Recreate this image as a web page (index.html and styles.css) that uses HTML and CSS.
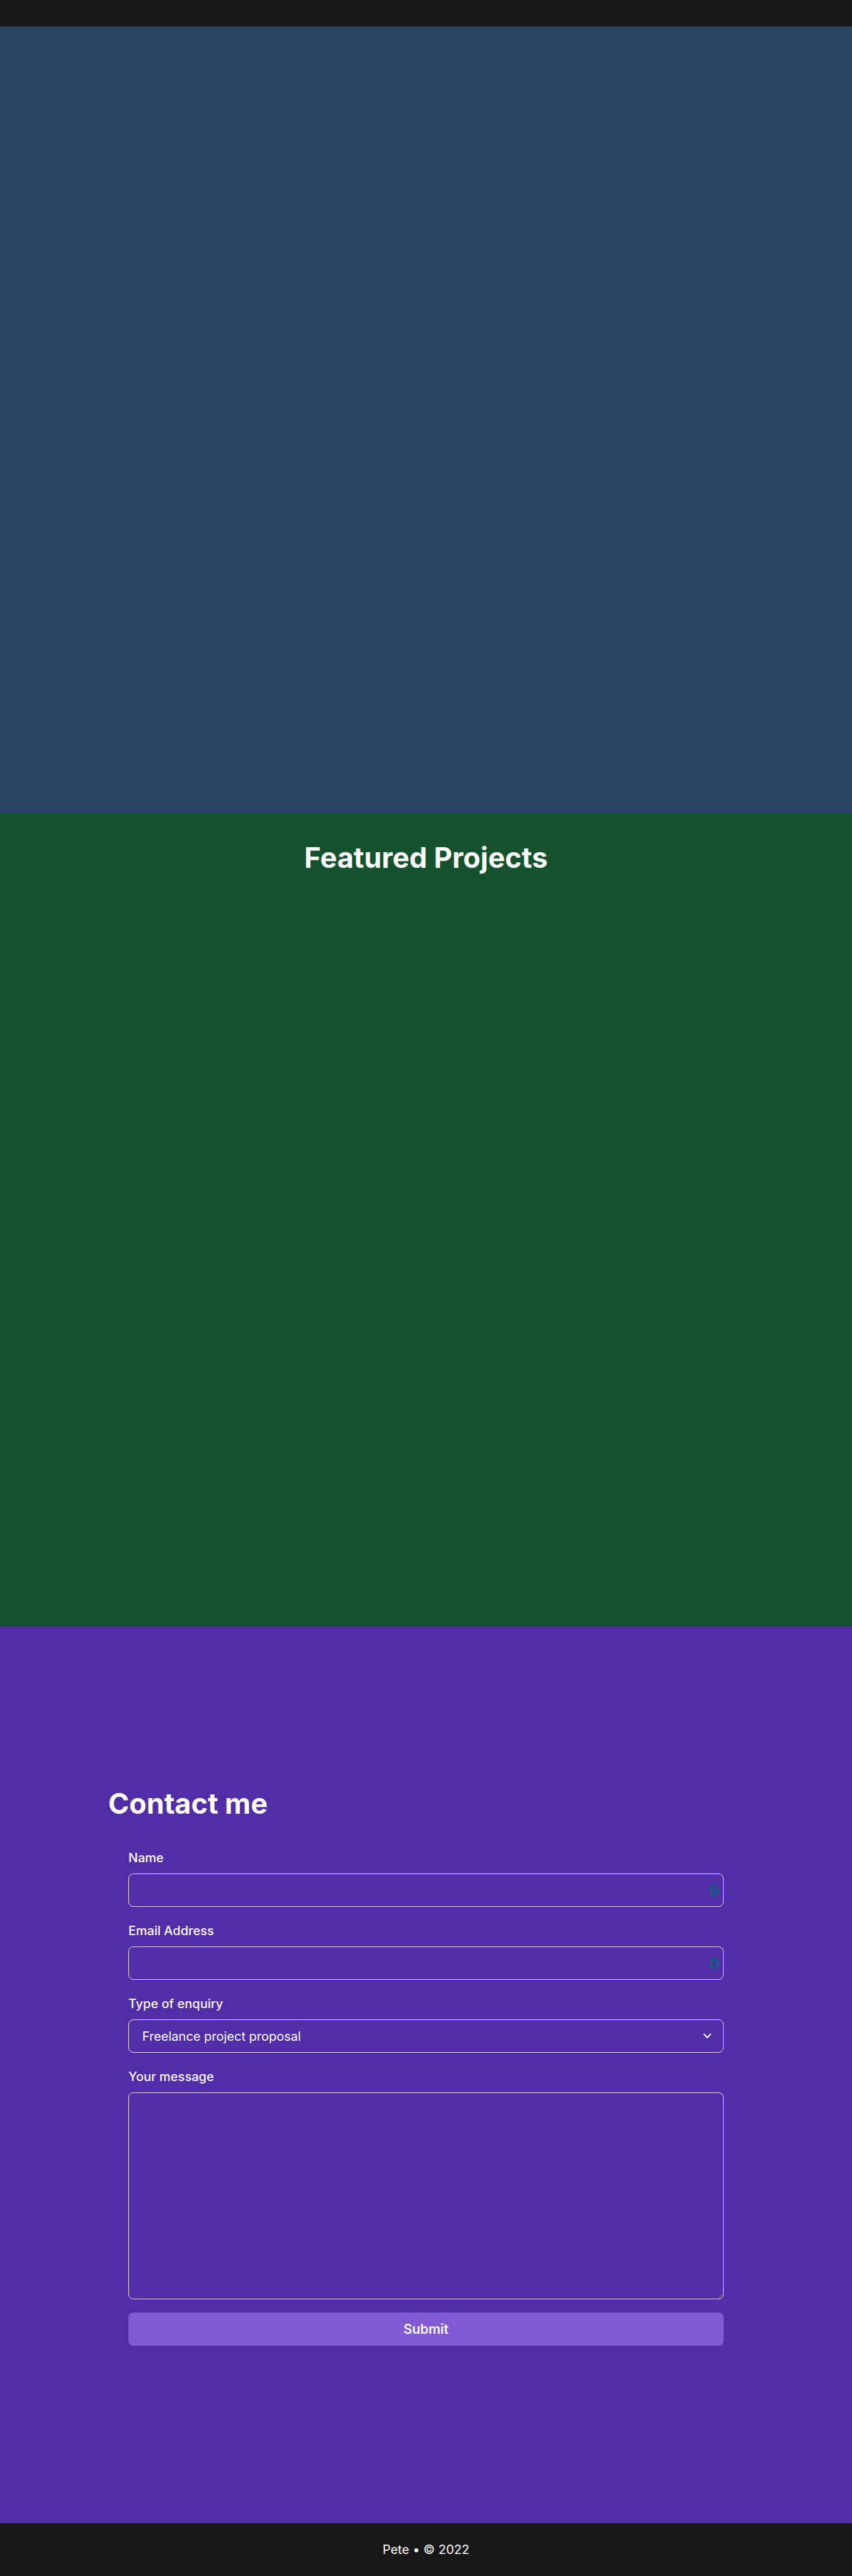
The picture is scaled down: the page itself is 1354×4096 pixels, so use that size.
FILE: index.html
```html
<!DOCTYPE html>
<html lang="en">
<head>
  <meta charset="utf-8">
  <meta name="viewport" content="width=device-width, initial-scale=1">
  <title>Pete</title>
  <link rel="stylesheet" href="styles.css">
</head>
<body>
  <header class="navbar"></header>
  <main>
    <section class="landing"></section>
    <section class="projects">
      <h1 class="heading">Featured Projects</h1>
    </section>
    <section class="contact">
      <div class="container">
        <h1 class="heading" id="contact-heading">Contact me</h1>
        <form class="form" aria-labelledby="contact-heading">
          <div class="field">
            <label class="label" for="name">Name</label>
            <div class="control">
              <input class="input" id="name" name="name" type="text">
              <svg class="autofill" viewBox="0 0 64 90" aria-hidden="true">
                <path d="M0 0L16 4V90L0 86ZM24 2L40 7V35L24 31ZM24 55L40 59V87L24 83ZM48 23L64 28V72L48 67Z"/>
              </svg>
            </div>
          </div>
          <div class="field">
            <label class="label" for="email">Email Address</label>
            <div class="control">
              <input class="input" id="email" name="email" type="email">
              <svg class="autofill" viewBox="0 0 64 90" aria-hidden="true">
                <path d="M0 0L16 4V90L0 86ZM24 2L40 7V35L24 31ZM24 55L40 59V87L24 83ZM48 23L64 28V72L48 67Z"/>
              </svg>
            </div>
          </div>
          <div class="field">
            <label class="label" for="type">Type of enquiry</label>
            <div class="control">
              <select class="input" id="type" name="type">
                <option value="hireMe">Freelance project proposal</option>
              </select>
              <svg class="chevron" viewBox="0 0 24 24" aria-hidden="true">
                <path d="M16.59 8.59L12 13.17 7.41 8.59 6 10l6 6 6-6z"/>
              </svg>
            </div>
          </div>
          <div class="field">
            <label class="label" for="comment">Your message</label>
            <textarea class="input message" id="comment" name="comment"></textarea>
          </div>
          <button class="submit" type="submit">Submit</button>
        </form>
      </div>
    </section>
  </main>
  <footer class="footer">
    <p class="copyright">Pete • © 2022</p>
  </footer>
</body>
</html>
```
FILE: styles.css
```css
*,
*::before,
*::after {
  box-sizing: border-box;
}

body {
  margin: 0;
  color: #fff;
  background: #18181b;
  font-family: Inter, "Liberation Sans", sans-serif;
  font-size: 20px;
  line-height: 34px;
}

.navbar {
  min-height: 42px;
  background: #18181b;
}

.landing {
  min-height: 1251px;
  background: #2a4365;
}

.projects {
  min-height: 1293px;
  padding: 42px;
  background: #14532d;
  text-align: center;
}

.heading {
  margin: 0;
  font-size: 45px;
  font-weight: 700;
  line-height: 58px;
}

.contact {
  padding: 253px 42px 282px;
  background: #512da8;
}

.container {
  max-width: 1010px;
  margin: 0 auto;
}

.form {
  display: flex;
  flex-direction: column;
  gap: 21px;
  padding: 40px 32px 0;
}

.field {
  display: flex;
  flex-direction: column;
  gap: 8px;
}

.label {
  font-weight: 500;
}

.control {
  position: relative;
  display: flex;
}

.input {
  display: block;
  width: 100%;
  height: 53px;
  margin: 0;
  padding: 0 21px;
  border: 1px solid #e2e8f0;
  border-radius: 8px;
  outline: 0;
  appearance: none;
  background: transparent;
  color: inherit;
  font: inherit;
}

.message {
  height: 329px;
  padding: 10px 21px;
  resize: vertical;
}

.autofill {
  position: absolute;
  top: 17px;
  right: 7px;
  width: 14px;
  height: 20px;
  fill: #0e6578;
}

.chevron {
  position: absolute;
  top: 13px;
  right: 13px;
  width: 26px;
  height: 26px;
  fill: #fff;
  pointer-events: none;
}

.submit {
  height: 53px;
  border: 0;
  border-radius: 8px;
  background: #805ad5;
  color: #fff;
  font: inherit;
  font-size: 21px;
  font-weight: 600;
}

.footer {
  padding: 25px;
  background: #18181b;
  text-align: center;
}

.copyright {
  margin: 0;
}
```
